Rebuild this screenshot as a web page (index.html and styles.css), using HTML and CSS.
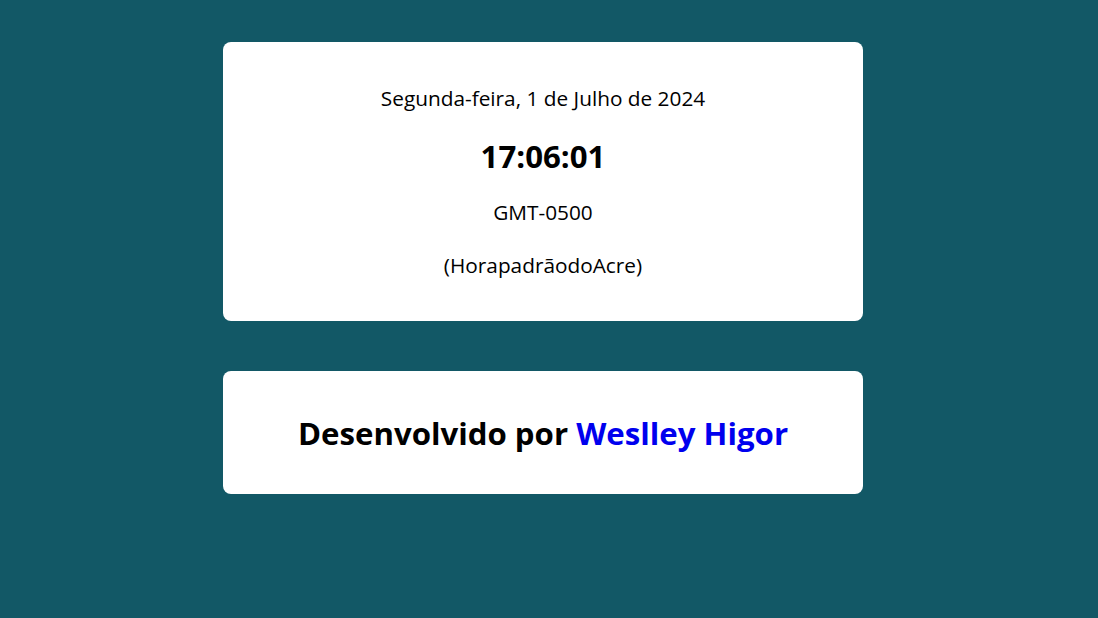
FILE: index.html
```html
<!DOCTYPE html>
<html lang="pt-BR">
<head>
<meta charset="utf-8">
<title>Relógio</title>
<link rel="stylesheet" href="styles.css">
</head>
<body>
<main class="page">
  <section class="card clock">
    <p class="date">Segunda-feira, 1 de Julho de 2024</p>
    <h2 class="time">17:06:01</h2>
    <p class="zone">GMT-0500</p>
    <p class="zone-name">(HorapadrãodoAcre)</p>
  </section>
  <section class="card credits">
    <h1 class="credit-text">Desenvolvido por <a class="author" href="#">Weslley Higor</a></h1>
  </section>
</main>
</body>
</html>
```
FILE: styles.css
```css
html, body {
  margin: 0;
  padding: 0;
}
body {
  background: #125866;
  font-family: "Open Sans", "Noto Sans", sans-serif;
  color: #000;
  height: 618px;
}
.page {
  width: 640px;
  padding: 42px 0 0 223px;
  display: flex;
  flex-direction: column;
  gap: 50px;
}
.card {
  background: #fff;
  border-radius: 8px;
  text-align: center;
}
.clock {
  padding: 43px 0 0;
  height: 279px;
  box-sizing: border-box;
  display: flex;
  flex-direction: column;
  align-items: center;
}
.date {
  margin: 0;
  font-size: 20.8px;
  line-height: 27px;
}
.time {
  margin: 24px 0 0;
  font-size: 31.2px;
  font-weight: 700;
  line-height: 41px;
}
.zone {
  margin: 22px 0 0;
  font-size: 20.8px;
  line-height: 27px;
}
.zone-name {
  margin: 26px 0 0;
  font-size: 20.8px;
  line-height: 27px;
}
.credits {
  height: 123px;
  display: flex;
  align-items: center;
  justify-content: center;
}
.credit-text {
  margin: 0;
  font-size: 31.2px;
  font-weight: 700;
  line-height: 44px;
}
.author {
  color: #0000ee;
  text-decoration: none;
}
```
